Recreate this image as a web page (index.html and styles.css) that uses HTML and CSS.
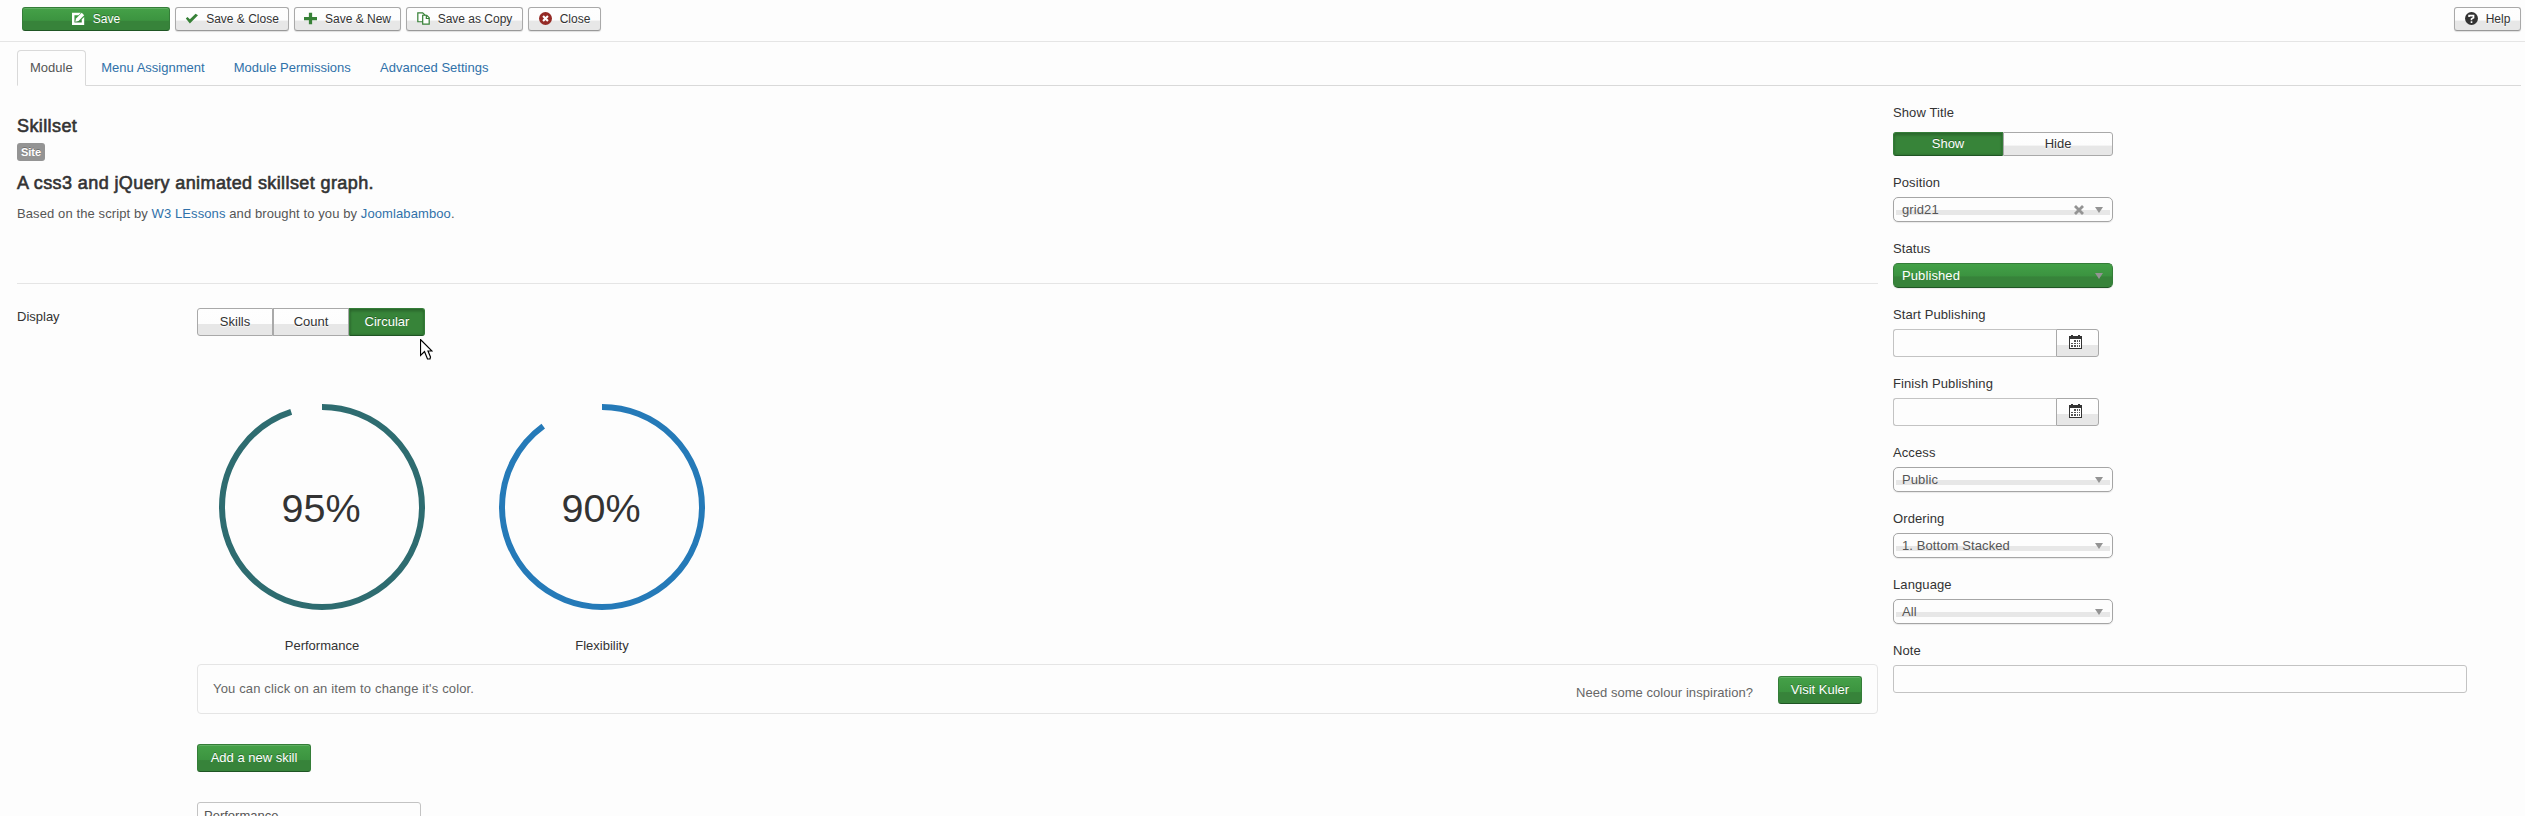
FILE: index.html
```html
<!DOCTYPE html>
<html lang="en">
<head>
<meta charset="utf-8">
<title>Module: Skillset</title>
<link rel="stylesheet" href="styles.css">
</head>
<body>
<header class="toolbar">
  <button class="btn small success save"><svg width="13" height="13" viewBox="0 0 16 16"><path fill="#fff" fill-rule="evenodd" d="M0 1h11L8 4H3v9h9V9l3-3v10H0z"/><path fill="#fff" d="M5 8l7-7 3 3-7 7-4 1z"/></svg><span>Save</span></button>
  <button class="btn small w114"><svg width="13" height="13" viewBox="0 0 16 16"><path fill="#378137" d="M1 8l2-2 3 3 7-7 3 2L6 14z"/></svg><span>Save &amp; Close</span></button>
  <button class="btn small w107"><svg width="13" height="13" viewBox="0 0 16 16"><path fill="#378137" d="M6 1h4v5h6v4h-6v5H6v-5H0V6h6z"/></svg><span>Save &amp; New</span></button>
  <button class="btn small w117"><svg width="13" height="13" viewBox="0 0 16 16"><g fill="#fff" stroke="#378137" stroke-width="1.500"><path d="M1 1h6l3 3v8H1z"/><path d="M7 4h5l3 3v8H7z"/><path fill="none" d="M11.500 4v4H15"/></g></svg><span>Save as Copy</span></button>
  <button class="btn small w73"><svg width="13" height="13" viewBox="0 0 16 16"><circle cx="8" cy="8" r="8" fill="#942a25"/><path stroke="#fff" stroke-width="2.600" d="M5 5l6 6M11 5l-6 6"/></svg><span>Close</span></button>
  <button class="btn small help"><svg width="13" height="13" viewBox="0 0 16 16"><circle cx="8" cy="8" r="8" fill="#333"/><path fill="none" stroke="#fff" stroke-width="2" d="M5 6V4.500h5.500V7L8 8.500V10M8 11.500v2"/></svg><span>Help</span></button>
</header>
<nav class="tabs">
  <a class="tab active">Module</a><a class="tab">Menu Assignment</a><a class="tab">Module Permissions</a><a class="tab">Advanced Settings</a>
</nav>
<div class="columns">
  <main class="main">
    <h1 class="title">Skillset</h1>
    <span class="label-site">Site</span>
    <h2 class="subtitle">A css3 and jQuery animated skillset graph.</h2>
    <p class="intro">Based on the script by <a>W3 LEssons</a> and brought to you by <a>Joomlabamboo</a>.</p>
    <div class="display">
      <div class="display-label">Display</div>
      <div class="controls">
        <div class="group">
          <button class="btn seg">Skills</button><button class="btn seg">Count</button><button class="btn seg success on">Circular</button>
          <svg class="cursor" width="13" height="22" viewBox="0 0 13 22"><path fill="#fff" stroke="#000" stroke-width="1.200" d="M.5.5v16l4-4 3 7.500h2.500l.5-2-2.500-6h4z"/></svg>
        </div>
        <div class="charts">
          <div class="chart">
            <div class="dial"><svg width="206" height="206" viewBox="0 0 206 206"><circle cx="103" cy="103" r="100" pathLength="100" stroke-dasharray="95 5" transform="rotate(-90 103 103)" fill="none" stroke="#2e6c70" stroke-width="6"/><text x="102" y="118">95%</text></svg></div>
            <div class="caption">Performance</div>
          </div>
          <div class="chart">
            <div class="dial"><svg width="206" height="206" viewBox="0 0 206 206"><circle cx="103" cy="103" r="100" pathLength="100" stroke-dasharray="90 10" transform="rotate(-90 103 103)" fill="none" stroke="#257ab8" stroke-width="6"/><text x="102" y="118">90%</text></svg></div>
            <div class="caption">Flexibility</div>
          </div>
        </div>
        <div class="well"><span class="hint">You can click on an item to change it's color.</span><span class="need">Need some colour inspiration?</span><button class="btn success kuler">Visit Kuler</button></div>
        <button class="btn success add">Add a new skill</button>
        <div class="input skill">Performance</div>
      </div>
    </div>
  </main>
  <aside class="side">
    <div class="field first"><label>Show Title</label><div class="switch"><button class="btn success on">Show</button><button class="btn">Hide</button></div></div>
    <div class="field"><label>Position</label><div class="select"><span>grid21</span><svg class="clear" width="10" height="10" viewBox="0 0 10 10"><path stroke="#949494" stroke-width="2.800" d="M1 1l8 8M9 1L1 9"/></svg><i></i></div></div>
    <div class="field"><label>Status</label><div class="select green"><span>Published</span><i></i></div></div>
    <div class="field"><label>Start Publishing</label><div class="date"><div class="input"></div><button class="btn"><svg width="13" height="14" viewBox="0 0 13 14"><path fill="#333" d="M0 1h2V0h2v1h5V0h2v1h2v13H0z"/><path fill="#fff" d="M1 4h11v9H1z"/><path fill="#555" d="M5 5h2v2H5zM8 5h1v2H8zM10 5h1v2h-1zM2 8h2v1H2zM5 8h2v1H5zM8 8h1v1H8zM10 8h1v1h-1zM2 10h2v2H2zM5 10h2v2H5zM8 10h1v2H8zM10 10h1v2h-1z"/></svg></button></div></div>
    <div class="field"><label>Finish Publishing</label><div class="date"><div class="input"></div><button class="btn"><svg width="13" height="14" viewBox="0 0 13 14"><path fill="#333" d="M0 1h2V0h2v1h5V0h2v1h2v13H0z"/><path fill="#fff" d="M1 4h11v9H1z"/><path fill="#555" d="M5 5h2v2H5zM8 5h1v2H8zM10 5h1v2h-1zM2 8h2v1H2zM5 8h2v1H5zM8 8h1v1H8zM10 8h1v1h-1zM2 10h2v2H2zM5 10h2v2H5zM8 10h1v2H8zM10 10h1v2h-1z"/></svg></button></div></div>
    <div class="field"><label>Access</label><div class="select"><span>Public</span><i></i></div></div>
    <div class="field"><label>Ordering</label><div class="select"><span>1. Bottom Stacked</span><i></i></div></div>
    <div class="field"><label>Language</label><div class="select"><span>All</span><i></i></div></div>
    <div class="field"><label>Note</label><div class="input note"></div></div>
  </aside>
</div>
</body>
</html>
```

FILE: styles.css
```css
* { box-sizing: border-box; }
html { height: 816px; overflow: hidden; }
body { margin: 0; height: 816px; overflow: hidden; background: #fdfdfd; color: #333; font: 13px/18px "Liberation Sans", Arial, sans-serif; }
a { color: #3071a9; }
svg { flex: none; }
h1, h2, p { margin: 0; }

.toolbar { display: flex; gap: 5px; height: 42px; padding: 7px 4px 0 22px; border-bottom: 1px solid #e5e5e5; }
.btn {
  display: flex; align-items: center; justify-content: center; height: 28px; padding: 0;
  border: 1px solid #a9a9a9; border-radius: 3px; color: #333; font: inherit; white-space: nowrap;
  background: linear-gradient(#fefefe 0, #fdfdfd 56%, #e7e7e7 58%, #e7e7e7 100%);
  text-shadow: 0 1px 1px #fff;
}
.btn.success {
  border-color: #347d38 #347d38 #1f5524; color: #fff; text-shadow: 0 -1px 0 rgba(0, 0, 0, .3);
  background: linear-gradient(#45a148 0, #3c9440 56%, #37833a 60%, #37833a 100%);
  box-shadow: inset 0 1px 0 rgba(255, 255, 255, .15);
}
.btn.success.on { background: #378439; box-shadow: inset 0 3px 2px rgba(0, 0, 0, .12), inset 0 0 2px 1px rgba(0, 0, 0, .12); }
.small { height: 24px; gap: 8px; padding-bottom: 1px; font-size: 12px; box-shadow: 0 1px 1px rgba(0, 0, 0, .12); border-bottom-color: #999; }
.save { width: 148px; }
.w114 { width: 114px; }
.w107 { width: 107px; }
.w117 { width: 117px; }
.w73 { width: 73px; }
.help { width: 67px; margin-left: auto; }

.tabs { display: flex; height: 36px; margin: 8px 4px 0 17px; border-bottom: 1px solid #d9d9d9; }
.tab { height: 36px; margin-right: 2px; padding: 8px 12.600px; border: 1px solid transparent; white-space: nowrap; }
.tab.active { padding: 8px 12px; border-color: #d9d9d9 #d9d9d9 #fdfdfd; border-radius: 4px 4px 0 0; color: #555; }

.columns { display: flex; gap: 15px; padding: 18px 58px 0 17px; }
.main { width: 1861px; padding-top: 12px; }
.title, .subtitle { font-size: 18px; line-height: 20px; font-weight: normal; letter-spacing: .4px; -webkit-text-stroke: .6px #333; }
.label-site { display: block; width: 28px; height: 18px; margin-top: 7px; border-radius: 3px; background: #949494; color: #fff; font-size: 11px; font-weight: bold; line-height: 18px; text-align: center; text-shadow: 0 -1px 0 rgba(0, 0, 0, .25); }
.subtitle { margin-top: 12px; }
.intro { margin-top: 12px; color: #555; letter-spacing: .1px; }
.display { display: flex; margin-top: 60px; padding-top: 24px; border-top: 1px solid #e5e5e5; }
.display-label { width: 180px; }
.controls { width: 1681px; }
.group { position: relative; display: flex; width: 228px; }
.seg { width: 76px; border-radius: 0; }
.seg:first-child { border-radius: 3px 0 0 3px; }
.seg.on { border-radius: 0 3px 3px 0; }
.cursor { position: absolute; left: 223px; top: 31px; }
.charts { display: flex; gap: 74px; padding: 68px 0 0 22px; }
.chart { width: 206px; }
.dial { height: 206px; }
.dial svg { display: block; }
.dial text { font-size: 39.500px; text-anchor: middle; fill: #333; }
.caption { margin-top: 27px; text-align: center; }
.well { display: flex; align-items: center; height: 50px; margin-top: 9px; padding: 0 15px; border: 1px solid #e5e5e5; border-radius: 4px; color: #666; }
.hint { letter-spacing: .15px; }
.need { margin: 7px 25px 0 auto; letter-spacing: .05px; }
.kuler { width: 84px; margin-top: 2px; }
.add { width: 114px; margin-top: 30px; }
.input { height: 28px; border: 1px solid #c3c3c3; border-radius: 3px; background: #fdfdfd; color: #555; }
.skill { width: 224px; margin-top: 30px; padding: 4px 6px; }

.side { width: 574px; }
.field { margin-bottom: 18px; letter-spacing: .1px; }
.field label { display: block; height: 18px; margin-bottom: 5px; }
.first label { margin-bottom: 10px; }
.switch { display: flex; width: 220px; }
.switch .btn { width: 110px; height: 24px; border-radius: 0 3px 3px 0; }
.switch .on { border-radius: 3px 0 0 3px; }
.select {
  display: flex; align-items: center; width: 220px; height: 25px; padding: 0 9px 0 8px; border: 1px solid #a5a5a5; border-radius: 5px; color: #555;
  background: linear-gradient(#e7e7e7, #e7e7e7) 2px 12px / 214px 5px no-repeat #fdfdfd; box-shadow: 0 1px 1px rgba(0, 0, 0, .08);
}
.select i { margin-left: auto; border: solid transparent; border-width: 6px 4px 0; border-top-color: #949494; }
.clear { margin-left: auto; }
.select .clear + i { margin-left: 11px; }
.select.green { border-color: #347d38 #347d38 #1f5524; color: #fff; background: linear-gradient(#43a047, #3b9340 52%, #37833a 56%, #37833a); }
.date { display: flex; }
.date .input { width: 163px; border-radius: 3px 0 0 3px; border-right: 0; }
.date .btn { width: 43px; padding: 0 5px 3px 0; border-radius: 0 3px 3px 0; }
.note { width: 574px; }
```
